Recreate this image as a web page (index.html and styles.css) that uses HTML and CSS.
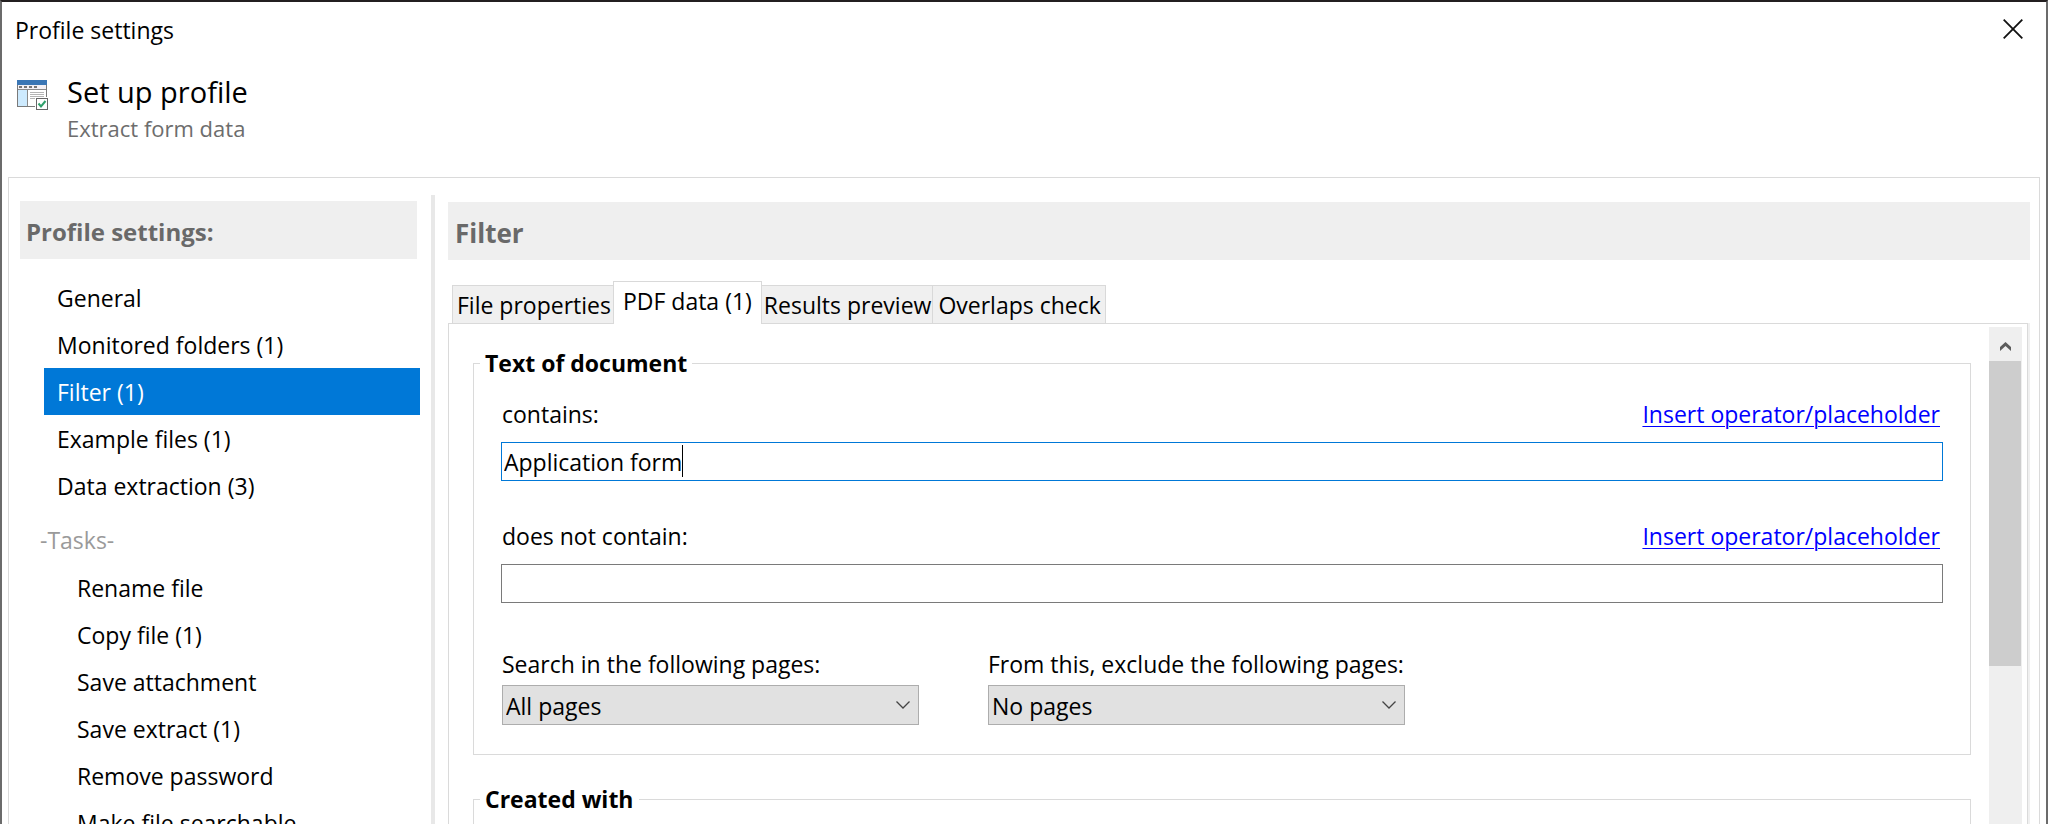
FILE: index.html
```html
<!DOCTYPE html>
<html lang="en">
<head>
<meta charset="utf-8">
<title>Profile settings</title>
<link rel="stylesheet" href="styles.css">
</head>
<body>
<div class="dialog">
  <div class="titlebar">
    <span class="titlebar-text">Profile settings</span>
    <button class="close" type="button" aria-label="Close">
      <svg width="20" height="20" viewBox="0 0 20 20"><path d="M0.7 0.7L19.3 19.3M19.3 0.7L0.7 19.3" stroke="#111" stroke-width="1.8" fill="none"/></svg>
    </button>
  </div>
  <header class="intro">
    <svg class="intro-icon" width="31" height="30" viewBox="0 0 31 30">
      <rect x="0.5" y="0.5" width="29" height="26" fill="#fff" stroke="#7a7a7a"/>
      <rect x="1" y="5" width="28" height="4" fill="#f3f0f5"/>
      <rect x="0" y="0" width="30" height="5" fill="#3a76b5"/>
      <path d="M2 7h3M7 7h3M12 7h3M17 7h3" stroke="#777" stroke-width="2"/>
      <path d="M1 9.5h28" stroke="#8a8a8a"/>
      <rect x="1" y="10" width="9" height="16" fill="#cdeafe"/>
      <path d="M10.500 10v16" stroke="#8a8a8a"/>
      <path d="M13 12.500h14M13 14.500h14M13 16.500h14M13 18.500h5" stroke="#b4b4b4"/>
      <rect x="18" y="17" width="13" height="13" fill="#fff"/>
      <rect x="19.500" y="18.500" width="11" height="11" fill="#fff" stroke="#666"/>
      <path d="M21.500 23.500L24 26.500L28.500 21" stroke="#2fa06b" stroke-width="2" fill="none"/>
    </svg>
    <div>
      <h1>Set up profile</h1>
      <p class="subtitle">Extract form data</p>
    </div>
  </header>
  <div class="frame">
    <nav class="sidebar">
      <h2 class="band">Profile settings:</h2>
      <ul class="nav">
        <li><a href="#general">General</a></li>
        <li><a href="#folders">Monitored folders (1)</a></li>
        <li><a class="selected" href="#filter" aria-current="page">Filter (1)</a></li>
        <li><a href="#examples">Example files (1)</a></li>
        <li><a href="#extraction">Data extraction (3)</a></li>
      </ul>
      <p class="group">-Tasks-</p>
      <ul class="nav tasks">
        <li><a href="#rename">Rename file</a></li>
        <li><a href="#copy">Copy file (1)</a></li>
        <li><a href="#attachment">Save attachment</a></li>
        <li><a href="#extract">Save extract (1)</a></li>
        <li><a href="#password">Remove password</a></li>
        <li><a href="#searchable">Make file searchable</a></li>
      </ul>
    </nav>
    <div class="divider"></div>
    <main class="content">
      <h2 class="band band-large">Filter</h2>
      <div class="tabs" role="tablist">
        <button class="tab" role="tab" type="button">File properties</button>
        <button class="tab active" role="tab" type="button" aria-selected="true">PDF data (1)</button>
        <button class="tab" role="tab" type="button">Results preview</button>
        <button class="tab" role="tab" type="button">Overlaps check</button>
      </div>
      <div class="panel">
        <form class="groups">
          <fieldset>
            <legend>Text of document</legend>
            <div class="group-body">
              <div class="field">
                <div class="field-head">
                  <label for="contains">contains:</label>
                  <a class="link" href="#insert">Insert operator/placeholder</a>
                </div>
                <div class="input-wrap">
                  <input class="text focused" id="contains" type="text" value="Application form">
                  <span class="caret"></span>
                </div>
              </div>
              <div class="field">
                <div class="field-head">
                  <label for="excludes">does not contain:</label>
                  <a class="link" href="#insert">Insert operator/placeholder</a>
                </div>
                <input class="text" id="excludes" type="text">
              </div>
              <div class="choices">
                <div class="choice">
                  <label for="search">Search in the following pages:</label>
                  <div class="select-wrap">
                    <select id="search"><option>All pages</option></select>
                    <svg class="chevron" width="14" height="8" viewBox="0 0 14 8"><path d="M0.500 0.500L7 7L13.500 0.500" stroke="#444" stroke-width="1.300" fill="none"/></svg>
                  </div>
                </div>
                <div class="choice">
                  <label for="exclude">From this, exclude the following pages:</label>
                  <div class="select-wrap">
                    <select id="exclude"><option>No pages</option></select>
                    <svg class="chevron" width="14" height="8" viewBox="0 0 14 8"><path d="M0.500 0.500L7 7L13.500 0.500" stroke="#444" stroke-width="1.300" fill="none"/></svg>
                  </div>
                </div>
              </div>
            </div>
          </fieldset>
          <fieldset>
            <legend>Created with</legend>
            <div class="group-body"></div>
          </fieldset>
        </form>
        <div class="scrollbar">
          <button class="scroll-up" type="button" aria-label="Scroll up">
            <svg width="11" height="9" viewBox="0 0 11 9"><path d="M0 9V5L5.500 0L11 5V9L5.500 4Z" fill="#5c5c5c"/></svg>
          </button>
          <div class="thumb"></div>
        </div>
      </div>
    </main>
  </div>
</div>
</body>
</html>
```
FILE: styles.css
```css
* { box-sizing: border-box; }

body {
  margin: 0;
  background: #fff;
  color: #000;
  font: 23px/32px "Open Sans", "Noto Sans", sans-serif;
}

h1, h2, p, ul { margin: 0; padding: 0; }
ul { list-style: none; }
button, input, select { font: inherit; color: inherit; }

.dialog {
  display: flex;
  flex-direction: column;
  height: 100vh;
  overflow: hidden;
  border: 2px solid #6b6b6b;
  border-top-color: #231f20;
  border-bottom: 0;
}

.titlebar {
  display: flex;
  justify-content: space-between;
  align-items: center;
  padding: 12px 23px 0 13px;
  height: 44px;
}

.close {
  display: flex;
  padding: 0;
  margin-bottom: 2px;
  border: 0;
  background: none;
}

.intro {
  display: flex;
  gap: 19px;
  padding: 26px 15px 33px;
}

.intro-icon { margin-top: 8px; }

h1 { font-size: 29px; line-height: 40px; font-weight: 400; }
.subtitle { color: #6d6d6d; font-size: 22px; }

.frame {
  display: flex;
  flex: 1;
  min-height: 0;
  overflow: hidden;
  margin: 0 6px;
  padding: 0 9px 0 11px;
  border: 1px solid #dadada;
  border-bottom: 0;
}

.sidebar { width: 400px; padding-top: 23px; }

.band {
  height: 58px;
  padding: 3px 6px 0;
  background: #efefef;
  color: #696969;
  font-size: 24px;
  line-height: 55px;
  font-weight: 700;
}

.band-large { padding: 4px 7px 0; font-size: 26px; }
.sidebar .band { margin-right: 3px; }
.nav { padding-left: 24px; }
.sidebar .band + .nav { margin-top: 15px; }

.nav a {
  display: block;
  padding: 2px 0 0 13px;
  line-height: 45px;
  color: #000;
  text-decoration: none;
}

.nav .selected { background: #0078d7; color: #fff; }
.nav.tasks a { padding-left: 33px; }
.group { padding: 8px 0 0 20px; line-height: 47px; color: #9a9a9a; }

.divider { width: 4px; margin: 17px 13px 0 11px; background: #e8e8e8; }

.content {
  display: flex;
  flex-direction: column;
  flex: 1;
  min-width: 0;
  padding-top: 24px;
}

.tabs {
  display: flex;
  align-items: flex-end;
  margin: 21px 0 -1px 4px;
  z-index: 1;
}

.tab {
  height: 39px;
  padding: 1px 1px 0 2px;
  border: 1px solid #d9d9d9;
  border-left-width: 0;
  background: #f0f0f0;
  white-space: nowrap;
}

.tab:first-child {
  padding: 1px 2px 0 4px;
  border-left-width: 1px;
  border-right-width: 0;
}

.tab:last-child { padding: 1px 4px 0 5px; }

.tab.active {
  height: 43px;
  padding: 0 9px 4px;
  border-left-width: 1px;
  border-bottom: 0;
  background: #fff;
}

.panel {
  display: flex;
  justify-content: space-between;
  flex: 1;
  min-height: 0;
  overflow: hidden;
  padding: 0 5px 0 24px;
  border: solid #dadada;
  border-width: 1px 1px 0;
  margin-right: 2px;
  box-shadow: 2px 0 #f0f0f0;
}

.groups {
  display: flex;
  flex-direction: column;
  flex: 1;
  gap: 28px;
  padding-top: 23px;
  margin-right: 18px;
}

fieldset {
  margin: 0;
  padding: 0 6px;
  border: 1px solid #dadada;
  min-width: 0;
}

legend { padding: 0 5px; font-weight: 700; }

.group-body {
  display: flex;
  flex-direction: column;
  min-height: 100px;
  padding: 19px 21px 29px 21px;
}

.field { margin-bottom: 39px; }

.field-head {
  display: flex;
  justify-content: space-between;
  padding: 0 3px 0 1px;
  margin-bottom: 12px;
}

.link { color: #00f; text-decoration-thickness: 1px; text-underline-offset: 3px; }
.input-wrap { position: relative; }

.text {
  display: block;
  width: 100%;
  height: 39px;
  padding: 1px 2px 0;
  border: 1px solid #7a7a7a;
  background: #fff;
  outline: 0;
}

.text.focused { border-color: #0078d7; }

.caret {
  position: absolute;
  left: 181px;
  top: 3px;
  width: 1px;
  height: 32px;
  background: #000;
}

.choices { display: flex; gap: 69px; padding: 6px 0 0 1px; }
.choice { display: flex; flex-direction: column; gap: 5px; width: 417px; }
.choice label { white-space: nowrap; }
.select-wrap { position: relative; }

select {
  display: block;
  width: 100%;
  height: 40px;
  padding: 2px 3px 0;
  border: 1px solid #adadad;
  border-radius: 0;
  background: #e1e1e1;
  appearance: none;
}

.chevron { position: absolute; right: 9px; top: 16px; pointer-events: none; }

.scrollbar { width: 33px; margin-top: 3px; background: #efefef; }

.scroll-up {
  display: flex;
  align-items: center;
  justify-content: center;
  width: 33px;
  height: 34px;
  padding: 4px 0 0;
  border: 0;
  background: #efefef;
}

.thumb { width: 32px; height: 305px; background: #cdcdcd; }
```
